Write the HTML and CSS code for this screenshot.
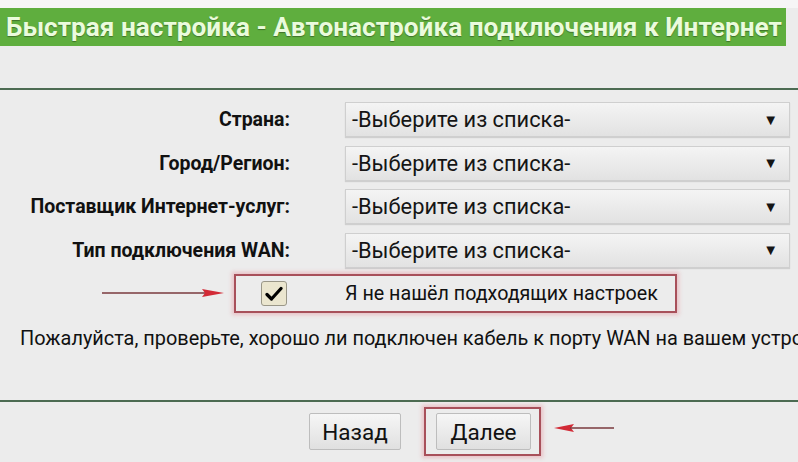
FILE: index.html
```html
<!DOCTYPE html>
<html lang="ru">
<head>
  <meta charset="UTF-8" />
  <meta name="viewport" content="width=device-width, initial-scale=1.0"/>
  <title>Быстрая настройка</title>
  <link rel="stylesheet" href="styles.css">
</head>
<body>
  <div class="top-strip"></div>
  <h1 class="title">Быстрая настройка - Автонастройка подключения к Интернет</h1>
  <div class="title-gap"></div>

  <div class="form">
    <div class="row">
      <label class="label">Страна:</label>
      <div class="select"><span>-Выберите из списка-</span><span class="arrow">▼</span></div>
    </div>
    <div class="row">
      <label class="label">Город/Регион:</label>
      <div class="select"><span>-Выберите из списка-</span><span class="arrow">▼</span></div>
    </div>
    <div class="row">
      <label class="label">Поставщик Интернет-услуг:</label>
      <div class="select"><span>-Выберите из списка-</span><span class="arrow">▼</span></div>
    </div>
    <div class="row">
      <label class="label">Тип подключения WAN:</label>
      <div class="select"><span>-Выберите из списка-</span><span class="arrow">▼</span></div>
    </div>

    <div class="check-row">
      <div class="check-box highlight">
        <span class="checkbox">
          <svg width="18" height="16" viewBox="0 0 18 16"><path d="M2 8.5 L6.5 13 L16 2.5" fill="none" stroke="#000" stroke-width="3.2" stroke-linecap="round" stroke-linejoin="round"/></svg>
        </span>
        <span class="check-text">Я не нашёл подходящих настроек</span>
      </div>
      <svg class="pointer pointer-right" width="124" height="14" viewBox="0 0 124 14">
        <line x1="0" y1="7" x2="104" y2="7" stroke="#7a3a3e" stroke-width="1.6"/>
        <path d="M100 3 L122 7 L100 11 L103 7 Z" fill="#d22a36"/>
      </svg>
    </div>

    <p class="note">Пожалуйста, проверьте, хорошо ли подключен кабель к порту WAN на вашем устройстве.</p>
  </div>

  <div class="footer">
    <button class="btn">Назад</button>
    <div class="highlight btn-wrap">
      <button class="btn">Далее</button>
      <svg class="pointer pointer-left" width="60" height="14" viewBox="0 0 60 14">
        <path d="M0 7 L20 3 L17 7 L20 11 Z" fill="#d22a36"/>
        <line x1="16" y1="7" x2="60" y2="7" stroke="#7a3a3e" stroke-width="1.6"/>
      </svg>
    </div>
  </div>
</body>
</html>
```

FILE: styles.css
```css
* {
  box-sizing: border-box;
}

body {
  margin: 0;
  width: 798px;
  height: 462px;
  overflow: hidden;
  background: #ececec;
  font-family: Roboto, 'Liberation Sans', sans-serif;
  color: #111;
}

.top-strip {
  height: 8px;
  background: #f6f6f6;
}

.title {
  margin: 0;
  width: 786px;
  height: 38px;
  padding: 0 0 0 6px;
  background: #5fae3e;
  color: #eafbdc;
  font-size: 26.2px;
  font-weight: bold;
  line-height: 38px;
  white-space: nowrap;
  overflow: hidden;
  text-shadow: 0 1px 1px rgba(0, 0, 0, 0.35);
}

.title-gap {
  height: 44px;
  border-bottom: 2px solid #4c6b52;
}

.form {
  padding-top: 12px;
}

.row {
  display: grid;
  grid-template-columns: 290px 445px;
  column-gap: 55px;
  align-items: center;
  height: 35px;
  margin-bottom: 8.5px;
}

.label {
  text-align: right;
  font-weight: bold;
  font-size: 19.5px;
  white-space: nowrap;
}

.select {
  display: flex;
  justify-content: space-between;
  align-items: center;
  height: 35px;
  padding: 0 11px 0 6px;
  background: linear-gradient(#f4f4f4, #e2e2e2);
  border: 1px solid #cfcfcf;
  box-shadow: 0 1px 1px rgba(0, 0, 0, 0.12);
  font-size: 21.8px;
  color: #151515;
}

.arrow {
  font-size: 15px;
}

.check-row {
  position: relative;
  height: 39px;
  margin: -2px 0 0 234px;
}

.highlight {
  border: 2px solid #a8505a;
  box-shadow: 0 0 4px 2px rgba(230, 140, 150, 0.45);
}

.check-box {
  display: flex;
  align-items: center;
  width: 443px;
  height: 39px;
  padding-left: 25px;
}

.checkbox {
  display: flex;
  justify-content: center;
  align-items: center;
  width: 26px;
  height: 25px;
  background: #ebe6cf;
  border: 1px solid #9a9788;
  border-radius: 3px;
}

.check-text {
  margin-left: 58px;
  font-size: 19.7px;
  white-space: nowrap;
}

.pointer {
  position: absolute;
}

.pointer-right {
  left: -132px;
  top: 12px;
}

.note {
  margin: 14px 0 0 20px;
  font-size: 19.9px;
  white-space: nowrap;
}

.footer {
  display: flex;
  align-items: center;
  margin-top: 50px;
  border-top: 2px solid #4c6b52;
  padding: 5px 0 0 309px;
}

.btn {
  height: 37px;
  padding: 0 10px;
  background: linear-gradient(#f6f6f6, #e0e0e0);
  border: 1px solid #bdbdbd;
  border-radius: 2px;
  font-family: inherit;
  font-size: 22.5px;
  color: #111;
}

.footer > .btn {
  width: 92px;
}

.btn-wrap {
  position: relative;
  margin-left: 23px;
  padding: 4px 8px 4px 10px;
}

.btn-wrap .btn {
  width: 95px;
}

.pointer-left {
  left: 128px;
  top: 12px;
}
```
